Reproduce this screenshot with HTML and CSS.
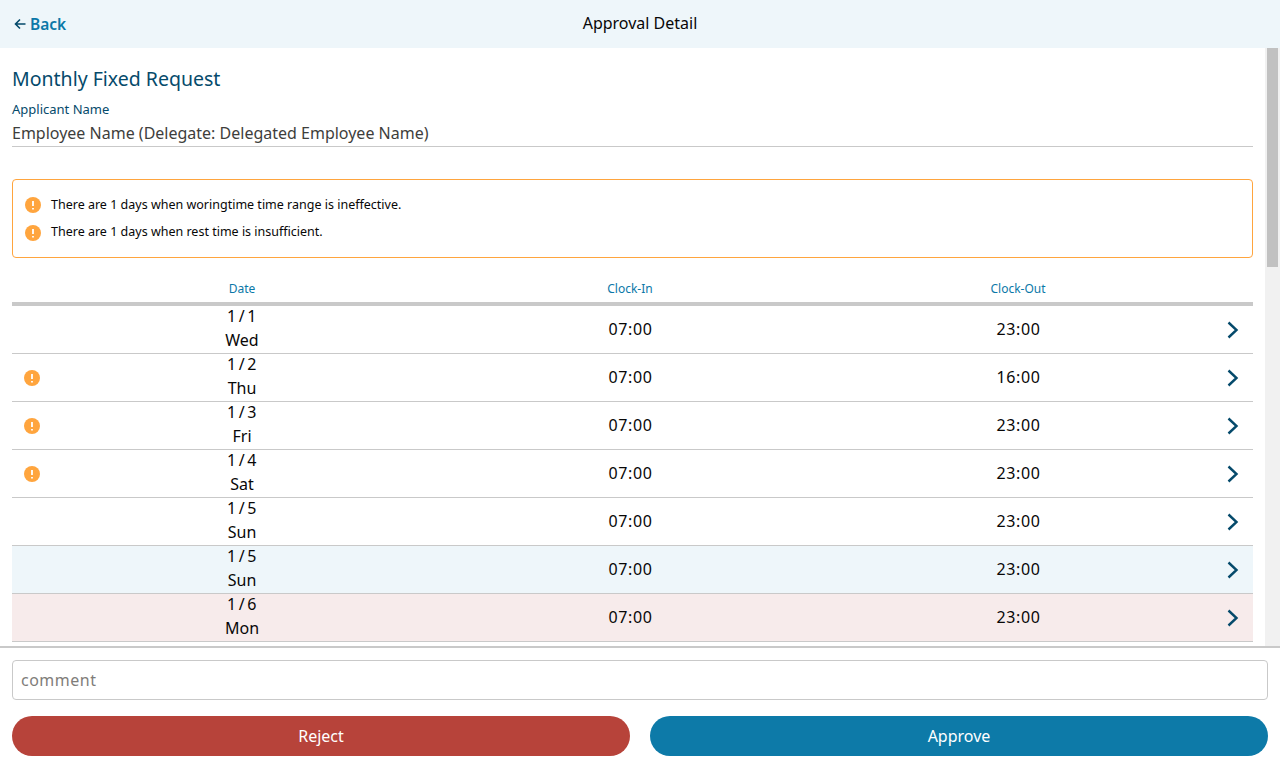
FILE: index.html
```html
<!DOCTYPE html>
<html lang="en">
<head>
    <meta charset="UTF-8">
    <meta name="viewport" content="width=device-width, initial-scale=1.0">
    <title>Approval Detail</title>
    <link rel="stylesheet" href="styles.css">
</head>
<body>
    <header class="topbar">
        <a class="back" href="#">
            <svg class="back-icon" viewBox="0 0 12 12"><path d="M11.5 6H1.5M6 1.5L1.5 6L6 10.5"/></svg>
            Back
        </a>
        <div class="topbar-title">Approval Detail</div>
    </header>

    <div class="scroll-area">
        <main class="content">
            <h1 class="page-title">Monthly Fixed Request</h1>
            <div class="field-label">Applicant Name</div>
            <div class="field-value">Employee Name (Delegate: Delegated Employee Name)</div>

            <div class="alert">
                <div class="alert-line">
                    <svg class="warn" viewBox="0 0 16 16"><circle cx="8" cy="8" r="8"/><path d="M8 4V9M8 11V12.4"/></svg>
                    <span>There are 1 days when woringtime time range is ineffective.</span>
                </div>
                <div class="alert-line">
                    <svg class="warn" viewBox="0 0 16 16"><circle cx="8" cy="8" r="8"/><path d="M8 4V9M8 11V12.4"/></svg>
                    <span>There are 1 days when rest time is insufficient.</span>
                </div>
            </div>

            <div class="table-head">
                <div></div>
                <div>Date</div>
                <div>Clock-In</div>
                <div>Clock-Out</div>
                <div></div>
            </div>

            <div class="row">
                <div></div>
                <div class="date"><span class="day">1/1</span><br>Wed</div>
                <div class="time">07:00</div>
                <div class="time">23:00</div>
                <svg class="chevron" viewBox="0 0 12 18"><path d="M1.5 1.5L9.5 9L1.5 16.5"/></svg>
            </div>
            <div class="row">
                <svg class="warn" viewBox="0 0 16 16"><circle cx="8" cy="8" r="8"/><path d="M8 4V9M8 11V12.4"/></svg>
                <div class="date"><span class="day">1/2</span><br>Thu</div>
                <div class="time">07:00</div>
                <div class="time">16:00</div>
                <svg class="chevron" viewBox="0 0 12 18"><path d="M1.5 1.5L9.5 9L1.5 16.5"/></svg>
            </div>
            <div class="row">
                <svg class="warn" viewBox="0 0 16 16"><circle cx="8" cy="8" r="8"/><path d="M8 4V9M8 11V12.4"/></svg>
                <div class="date"><span class="day">1/3</span><br>Fri</div>
                <div class="time">07:00</div>
                <div class="time">23:00</div>
                <svg class="chevron" viewBox="0 0 12 18"><path d="M1.5 1.5L9.5 9L1.5 16.5"/></svg>
            </div>
            <div class="row">
                <svg class="warn" viewBox="0 0 16 16"><circle cx="8" cy="8" r="8"/><path d="M8 4V9M8 11V12.4"/></svg>
                <div class="date"><span class="day">1/4</span><br>Sat</div>
                <div class="time">07:00</div>
                <div class="time">23:00</div>
                <svg class="chevron" viewBox="0 0 12 18"><path d="M1.5 1.5L9.5 9L1.5 16.5"/></svg>
            </div>
            <div class="row">
                <div></div>
                <div class="date"><span class="day">1/5</span><br>Sun</div>
                <div class="time">07:00</div>
                <div class="time">23:00</div>
                <svg class="chevron" viewBox="0 0 12 18"><path d="M1.5 1.5L9.5 9L1.5 16.5"/></svg>
            </div>
            <div class="row row-blue">
                <div></div>
                <div class="date"><span class="day">1/5</span><br>Sun</div>
                <div class="time">07:00</div>
                <div class="time">23:00</div>
                <svg class="chevron" viewBox="0 0 12 18"><path d="M1.5 1.5L9.5 9L1.5 16.5"/></svg>
            </div>
            <div class="row row-pink">
                <div></div>
                <div class="date"><span class="day">1/6</span><br>Mon</div>
                <div class="time">07:00</div>
                <div class="time">23:00</div>
                <svg class="chevron" viewBox="0 0 12 18"><path d="M1.5 1.5L9.5 9L1.5 16.5"/></svg>
            </div>
        </main>
        <div class="scrollbar"><div class="scrollbar-thumb"></div></div>
    </div>

    <footer class="footer">
        <input class="comment" type="text" placeholder="comment">
        <div class="buttons">
            <button class="btn btn-reject">Reject</button>
            <button class="btn btn-approve">Approve</button>
        </div>
    </footer>
</body>
</html>
```

FILE: styles.css
```css
* {
    box-sizing: border-box;
}
body {
    margin: 0;
    height: 768px;
    display: flex;
    flex-direction: column;
    overflow: hidden;
    font-family: "Noto Sans", Arial, sans-serif;
    color: #080707;
    background-color: white;
}
.topbar {
    flex: none;
    height: 48px;
    padding-bottom: 2px;
    display: flex;
    align-items: center;
    justify-content: center;
    position: relative;
    background-color: #eef6fa;
}
.topbar-title {
    font-size: 16px;
}
.back {
    position: absolute;
    left: 14px;
    top: 14px;
    display: flex;
    align-items: center;
    gap: 4px;
    font-size: 15.5px;
    font-weight: 600;
    line-height: 20px;
    color: #0b78a8;
    text-decoration: none;
}
.back-icon {
    width: 12px;
    height: 12px;
    fill: none;
    stroke: #054a6b;
    stroke-width: 1.6;
}
.scroll-area {
    flex: 1;
    min-height: 0;
    display: flex;
}
.content {
    flex: 1;
    min-width: 0;
    overflow: hidden;
    padding: 0 12px;
}
.scrollbar {
    flex: none;
    width: 15px;
    padding: 0 2px;
    background-color: #f1f1f1;
}
.scrollbar-thumb {
    height: 219px;
    background-color: #c1c1c1;
}
.page-title {
    margin: 18px 0 0;
    font-size: 19.5px;
    font-weight: 400;
    line-height: 26px;
    color: #054a6b;
}
.field-label {
    margin-top: 9px;
    font-size: 13px;
    line-height: 16px;
    color: #054a6b;
}
.field-value {
    height: 30px;
    padding-top: 4px;
    font-size: 16px;
    line-height: 24px;
    color: #3e3e3c;
    border-bottom: 1px solid #c9c9c9;
}
.alert {
    margin-top: 32px;
    height: 79px;
    padding: 11px 12px;
    border: 1px solid #ffa53e;
    border-radius: 4px;
}
.alert-line {
    display: flex;
    align-items: center;
    gap: 10px;
    height: 28px;
    font-size: 12.5px;
}
.alert-line span {
    margin-top: -3px;
}
.alert-line:first-child span {
    margin-top: -1px;
}
.warn {
    width: 16px;
    height: 16px;
    fill: #ffa53e;
    stroke: white;
    stroke-width: 1.8;
}
.warn circle {
    stroke: none;
}
.table-head, .row {
    display: grid;
    grid-template-columns: 36px repeat(3, 1fr) 41px;
    align-items: center;
    text-align: center;
}
.table-head {
    margin-top: 22px;
    height: 26px;
    padding-top: 1px;
    font-size: 12px;
    line-height: 16px;
    align-items: start;
    color: #0b78a8;
    border-bottom: 4px solid #c9c9c9;
}
.row {
    height: 48px;
    font-size: 16px;
    line-height: 24px;
    border-bottom: 1px solid #c9c9c9;
}
.row > .date {
    margin-top: -4px;
}
.row-blue {
    background-color: #eef6fa;
}
.row-pink {
    background-color: #f7ebeb;
}
.row .warn {
    margin-left: 12px;
}
.day {
    padding-left: 2px;
    letter-spacing: 2.5px;
}
.time {
    margin-top: -2px;
    padding-left: 1px;
    letter-spacing: 0.6px;
}
.chevron {
    justify-self: center;
    width: 12px;
    height: 18px;
    fill: none;
    stroke: #054a6b;
    stroke-width: 2.4;
}
.footer {
    flex: none;
    height: 122px;
    padding: 12px;
    border-top: 2px solid #c9c9c9;
}
.comment {
    display: block;
    width: 100%;
    height: 40px;
    padding: 0 8px;
    font-family: inherit;
    font-size: 16px;
    letter-spacing: 0.5px;
    border: 1px solid #c9c9c9;
    border-radius: 4px;
    outline: none;
}
.comment::placeholder {
    color: #7f7d7a;
}
.buttons {
    display: flex;
    gap: 20px;
    margin-top: 16px;
}
.btn {
    flex: 1;
    height: 40px;
    font-family: inherit;
    font-size: 16px;
    color: white;
    border: none;
    border-radius: 20px;
}
.btn-reject {
    background-color: #b7433a;
}
.btn-approve {
    background-color: #0d7aa8;
}
```
